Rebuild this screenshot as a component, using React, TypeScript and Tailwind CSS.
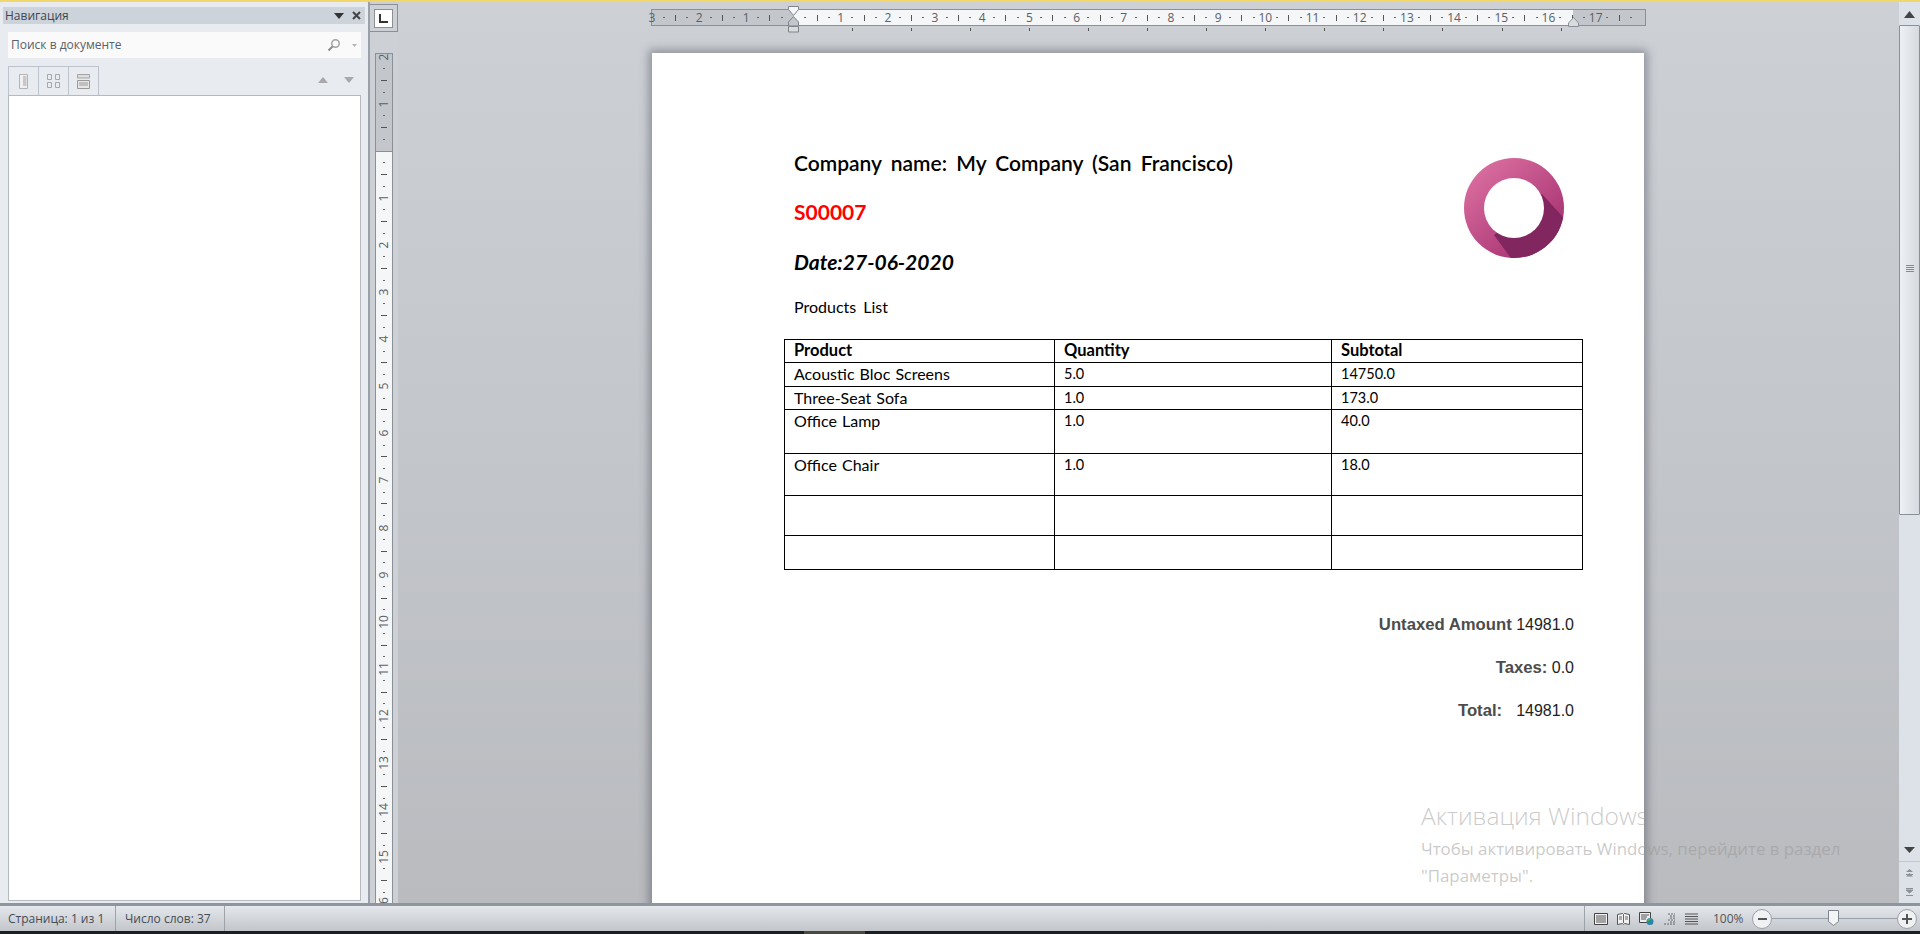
import React from "react";

const uiFont = "font-['Open_Sans','Noto_Sans',sans-serif]";
const docFont = "font-['Lato','Noto_Sans',sans-serif]";

const rows = [
  { product: "Acoustic Bloc Screens", qty: "5.0", subtotal: "14750.0", h: "h-[24px]" },
  { product: "Three-Seat Sofa", qty: "1.0", subtotal: "173.0", h: "h-[23px]" },
  { product: "Office Lamp", qty: "1.0", subtotal: "40.0", h: "h-[44px]" },
  { product: "Office Chair", qty: "1.0", subtotal: "18.0", h: "h-[42px]" },
  { product: "", qty: "", subtotal: "", h: "h-[40px]" },
  { product: "", qty: "", subtotal: "", h: "h-[34px]" },
];

function RulerTick({ pos, vertical }: { pos: number; vertical?: boolean }) {
  const quarter = Math.round(pos * 4);
  if (quarter === 0) return null;
  if (quarter % 4 === 0) {
    return (
      <span className={`${uiFont} text-[12px] leading-none text-[#5a5f66] ${vertical ? "-rotate-90" : ""}`}>
        {Math.abs(quarter / 4)}
      </span>
    );
  }
  if (quarter % 2 === 0) {
    return <span className={vertical ? "h-px w-[6px] bg-[#555]" : "h-[6px] w-px bg-[#555]"} />;
  }
  return <span className="h-px w-[2px] bg-[#666]" />;
}

function HorizontalRuler() {
  const slots = Array.from({ length: 84 }, (_, i) => -3 + i / 4);
  return (
    <div className="relative ml-[253px] h-[17px] w-[995px] border border-[#8b9097]">
      <div className="flex h-full">
        <div className="w-[141px] bg-[#c3c7cc]" />
        <div className="w-[780px] bg-[#f5f6f7]" />
        <div className="flex-1 bg-[#c3c7cc]" />
      </div>
      <div className="absolute left-[-6px] top-0 flex h-full">
        {slots.map((p) => (
          <div key={p} className="flex h-full w-[11.81px] shrink-0 items-center justify-center">
            <RulerTick pos={p} />
          </div>
        ))}
      </div>
      <svg className="absolute left-[135px] top-[-4px]" width="13" height="27" viewBox="0 0 13 27">
        <path d="M1.5.5h10v3l-5 6-5-6z" fill="#f5f6f7" stroke="#7e8389" />
        <path d="M6.5 10.5l5 5.5v4h-10v-4z" fill="#c3c7cc" stroke="#7e8389" />
        <path d="M1.5 20.5h10v5.500h-10z" fill="#d9dbde" stroke="#7e8389" />
      </svg>
      <svg className="absolute left-[915px] top-[7px]" width="13" height="10" viewBox="0 0 13 10">
        <path d="M6.500.5l5 5.500v3.500h-10v-3.500z" fill="#d9dbde" stroke="#8b9097" />
      </svg>
    </div>
  );
}

function TabStops() {
  return (
    <div className="ml-[454px] mt-[2px] flex h-[3px]">
      {Array.from({ length: 13 }, (_, i) => (
        <div key={i} className="w-[59.05px] shrink-0">
          <div className="h-[3px] w-px bg-[#555]" />
        </div>
      ))}
    </div>
  );
}

function VerticalRuler() {
  const slots = Array.from({ length: 74 }, (_, i) => -2 + i / 4);
  return (
    <div className="relative ml-[5px] mt-[21px] min-h-0 w-[18px] flex-1 overflow-hidden border-x border-t border-[#8b9097]">
      <div className="h-[98px] border-b border-[#8b9097] bg-[#c3c7cc]" />
      <div className="h-full bg-[#f5f6f7]" />
      <div className="absolute left-0 top-[-3px] flex w-full flex-col">
        {slots.map((p) => (
          <div key={p} className="flex h-[11.775px] shrink-0 items-center justify-center">
            <RulerTick pos={p} vertical />
          </div>
        ))}
      </div>
    </div>
  );
}

function NavPanel() {
  return (
    <aside className={`${uiFont} flex w-[368px] shrink-0 flex-col bg-[#e8ebf0]`}>
      <div className="mx-[3px] mt-[5px] flex h-[17px] items-center justify-between bg-[#cdd3da] pl-[2px] pr-[4px]">
        <span className="text-[12px] leading-none text-[#3a4654]">Навигация</span>
        <div className="flex items-center gap-[8px]">
          <svg width="10" height="6" viewBox="0 0 10 6">
            <path d="M0 0h10L5 6z" fill="#333" />
          </svg>
          <svg width="9" height="9" viewBox="0 0 9 9">
            <path d="M1 1l7 7M8 1L1 8" stroke="#444" strokeWidth="2" />
          </svg>
        </div>
      </div>
      <div className="ml-[8px] mr-[7px] mt-[8px] flex h-[26px] items-center justify-between bg-[#fafafa] pl-[3px] pr-[4px]">
        <span className="text-[12px] leading-none text-[#5b6168]">Поиск в документе</span>
        <div className="flex items-center gap-[11px]">
          <svg width="14" height="14" viewBox="0 0 14 14" fill="none">
            <circle cx="8.500" cy="5.500" r="3.700" stroke="#a2a2a2" strokeWidth="1.500" />
            <path d="M5.500 8.500L1.500 12.500" stroke="#8b8b8b" strokeWidth="2" />
          </svg>
          <svg width="5" height="3" viewBox="0 0 5 3">
            <path d="M0 0h5L2.500 3z" fill="#b5b5b5" />
          </svg>
        </div>
      </div>
      <div className="ml-[8px] mr-[7px] mt-[8px] flex h-[29px] items-end justify-between">
        <div className="flex h-full border-t border-l border-[#bcc3cc]">
          <div className="flex w-[30px] items-center justify-center border-r border-[#bcc3cc]">
            <svg width="9" height="15" viewBox="0 0 9 15">
              <path d="M.5.500h8v14h-8z" fill="#f1f0f0" stroke="#b4b4b4" />
              <path d="M4 3h3.500M4 5h3.500M4 7h3.500M4 9h3.500M4 11h3.500" stroke="#a0a0a0" />
            </svg>
          </div>
          <div className="flex w-[30px] items-center justify-center border-r border-[#bcc3cc]">
            <svg width="13" height="14" viewBox="0 0 13 14">
              <path d="M.5.500h4v5h-4zM8.500.500h4v5h-4zM.5 8.500h4v5h-4zM8.500 8.500h4v5h-4z" fill="none" stroke="#a8a8a8" />
            </svg>
          </div>
          <div className="flex w-[30px] items-center justify-center border-r border-[#bcc3cc]">
            <svg width="13" height="15" viewBox="0 0 13 15">
              <path d="M.5.500h12v3.500h-12z" fill="#ddd" stroke="#a5a5a5" />
              <path d="M.5 6.500h12v8h-12z" fill="#e6e6e6" stroke="#999" />
              <path d="M2 9h9M2 11h9" stroke="#999" />
            </svg>
          </div>
        </div>
        <div className="mb-[12px] mr-[7px] flex gap-[16px]">
          <svg width="10" height="6" viewBox="0 0 10 6">
            <path d="M0 6h10L5 0z" fill="#a9a9a9" />
          </svg>
          <svg width="10" height="6" viewBox="0 0 10 6">
            <path d="M0 0h10L5 6z" fill="#a9a9a9" />
          </svg>
        </div>
      </div>
      <div className="mb-[2px] ml-[8px] mr-[7px] flex-1 border border-[#b5bac0] bg-white" />
    </aside>
  );
}

function Logo() {
  return (
    <svg className="mr-[16px] mt-[13px]" width="100" height="100" viewBox="0 0 100 100">
      <defs>
        <linearGradient id="ring" x1="0.15" y1="0.1" x2="0.85" y2="0.9">
          <stop offset="0" stopColor="#d96d9e" />
          <stop offset="1" stopColor="#a42f70" />
        </linearGradient>
        <clipPath id="disc">
          <circle cx="50" cy="50" r="50" />
        </clipPath>
      </defs>
      <circle cx="50" cy="50" r="50" fill="url(#ring)" />
      <path clipPath="url(#disc)" d="M78 36L118 80 60 118 30 77z" fill="#82265f" />
      <circle cx="50" cy="50" r="30" fill="white" />
    </svg>
  );
}

function Page() {
  return (
    <div className={`${docFont} ml-[254px] mt-[22px] h-[1404px] w-[992px] bg-white pl-[132px] shadow-[0_0_9px_3px_rgba(60,65,75,0.45)]`}>
      <div className="flex w-[796px] justify-between pt-[92px]">
        <div className="pl-[10px]">
          <p className="h-[49px] text-[21px] font-semibold leading-[36px] text-black [word-spacing:4px]">
            Company name: My Company (San Francisco)
          </p>
          <p className="h-[50px] text-[21px] font-bold leading-[36px] text-[#ff0000]">S00007</p>
          <p className="h-[53px] text-[21px] font-bold italic leading-[36px] text-black">Date:27-06-2020</p>
          <p className="text-[16px] leading-[20px] text-black [word-spacing:3px]">Products List</p>
        </div>
        <Logo />
      </div>
      <table className="mt-[22px] w-[799px] table-fixed border-collapse text-[14.500px] leading-[20px] text-black">
        <thead>
          <tr className="h-[23px] text-[16.500px]">
            <th className="w-[270px] border border-black pl-[9px] text-left align-top font-bold">Product</th>
            <th className="w-[277px] border border-black pl-[9px] text-left align-top font-bold">Quantity</th>
            <th className="border border-black pl-[9px] text-left align-top font-bold">Subtotal</th>
          </tr>
        </thead>
        <tbody>
          {rows.map((r, i) => (
            <tr key={i} className={r.h}>
              <td className="border border-black pl-[9px] pt-px align-top text-[16px] [word-spacing:1px]">{r.product}</td>
              <td className="border border-black pl-[9px] pt-px align-top">{r.qty}</td>
              <td className="border border-black pl-[9px] pt-px align-top">{r.subtotal}</td>
            </tr>
          ))}
        </tbody>
      </table>
      <div className="mt-[46px] flex w-[790px] flex-col items-end gap-[25px] font-['Liberation_Sans',sans-serif] text-[16px] leading-[18px] text-[#222]">
        <p>
          <b className="text-[16.700px] text-[#4c4c4c]">Untaxed Amount</b> 14981.0
        </p>
        <p>
          <b className="text-[16.700px] text-[#4c4c4c]">Taxes:</b> 0.0
        </p>
        <p>
          <b className="text-[16.700px] text-[#4c4c4c]">Total:</b>
          <span className="ml-[14px]">14981.0</span>
        </p>
      </div>
    </div>
  );
}

function ScrollBar() {
  return (
    <div className="flex w-[21px] shrink-0 flex-col bg-[#dde1e8]">
      <div className="mt-[2px] flex h-[21px] items-center justify-center">
        <svg width="11" height="7" viewBox="0 0 11 7">
          <path d="M0 7h11L5.500 0z" fill="#444" />
        </svg>
      </div>
      <div className="flex h-[490px] items-end justify-center rounded-[1px] border border-[#8b9097] bg-linear-to-r from-[#eef0f4] to-[#d6dae0] pb-[241px]">
        <svg width="8" height="8" viewBox="0 0 8 8">
          <path d="M0 .5h8M0 2.500h8M0 4.500h8M0 6.500h8" stroke="#8a8a8a" />
        </svg>
      </div>
      <div className="flex flex-1 items-end justify-center pb-[8px]">
        <svg width="11" height="6" viewBox="0 0 11 6">
          <path d="M0 0h11L5.500 6z" fill="#444" />
        </svg>
      </div>
      <div className="flex h-[42px] flex-col items-center justify-around border-t border-[#c3c7ce] py-[2px]">
        <svg width="7" height="8" viewBox="0 0 7 8">
          <path d="M3.500 0L7 3H0zM0 5h7v1H0zM3.500 4L7 7.500H0z" fill="#8d9096" />
        </svg>
        <svg width="7" height="8" viewBox="0 0 7 8">
          <path d="M0 .5h7M0 2h7L3.500 5zM0 7.500h7" stroke="#8d9096" fill="#8d9096" />
        </svg>
      </div>
    </div>
  );
}

function StatusBar() {
  return (
    <footer className={`${uiFont} flex h-[28px] shrink-0 items-center border-t-[3px] border-[#8f959c] bg-linear-to-b from-[#e4e7eb] to-[#c2c6cb] text-[12px] text-[#444c55]`}>
      <div className="flex h-full w-[116px] items-center border-r border-[#9ea3a9] pl-[8px]">Страница: 1 из 1</div>
      <div className="flex h-full w-[109px] items-center border-r border-[#9ea3a9] pl-[9px]">Число слов: 37</div>
      <div className="ml-auto flex h-full items-center border-l border-[#9ea3a9] pl-[9px]">
        <div className="flex items-center gap-[9px]">
          <svg width="14" height="12" viewBox="0 0 14 12">
            <path d="M.5.500h13v11H.5z" fill="#f2f2f2" stroke="#444" />
            <path d="M2 3h10M2 5h10M2 7h10M2 9h10" stroke="#555" />
          </svg>
          <svg width="13" height="12" viewBox="0 0 13 12">
            <path d="M.5 1.500l5-1 1 1 1-1 5 1v10l-5-1-1 1-1-1-5 1z" fill="#f2f2f2" stroke="#555" />
            <path d="M6.500 2v8M2 4h3M2 6h3M8 4h3M8 6h3" stroke="#666" />
          </svg>
          <svg width="15" height="13" viewBox="0 0 15 13">
            <path d="M.5.500h11v10H.5z" fill="#eee" stroke="#444" />
            <path d="M2 3h8M2 5h6M2 7h5" stroke="#555" />
            <circle cx="11" cy="9.500" r="3.500" fill="#2a85a8" />
            <path d="M9 9a2 2 0 013-1.500" stroke="#5cb04a" strokeWidth="1.500" fill="none" />
          </svg>
          <svg width="13" height="12" viewBox="0 0 13 12">
            <path d="M5 1h7M7 3h5M7 5h5M5 7h7M7 9h5M1 11h11" stroke="#666" strokeDasharray="2 1" />
          </svg>
          <svg width="13" height="12" viewBox="0 0 13 12">
            <path d="M0 1h13M0 3.500h13M0 6h13M0 8.500h13M0 11h13" stroke="#555" />
          </svg>
        </div>
        <span className="ml-[15px] w-[31px] text-[#555]">100%</span>
        <div className="ml-[8px] flex items-center pr-[3px]">
          <div className="flex h-[20px] w-[20px] items-center justify-center rounded-full border border-[#9aa0a8] bg-[#f0f1f3]">
            <span className="h-[2px] w-[9px] bg-[#555]" />
          </div>
          <div className="relative h-px w-[125px] bg-[#9aa0a8]">
            <svg className="absolute left-[56px] top-[-8px]" width="11" height="16" viewBox="0 0 11 16">
              <path d="M.5.500h10v11l-5 4-5-4z" fill="#f3f4f5" stroke="#7f858c" />
            </svg>
          </div>
          <div className="relative flex h-[20px] w-[20px] items-center justify-center rounded-full border border-[#9aa0a8] bg-[#f0f1f3]">
            <span className="h-[2px] w-[10px] bg-[#555]" />
            <span className="absolute h-[10px] w-[2px] bg-[#555]" />
          </div>
        </div>
      </div>
    </footer>
  );
}

export default function App() {
  return (
    <div className="relative flex h-screen w-screen flex-col overflow-hidden bg-[#cdd1d6]">
      <div className="h-[2px] shrink-0 bg-[#f1d66a]" />
      <div className="flex min-h-0 flex-1">
        <NavPanel />
        <div className="flex w-[30px] shrink-0 flex-col border-l-2 border-[#9aa0a8] bg-[#cdd1d6]">
          <div className="mt-[2px] flex h-[28px] w-[28px] items-center justify-center border-y border-r border-[#8b9097]">
            <div className="flex h-[19px] w-[19px] items-center justify-center border border-[#8b9097] bg-white">
              <svg width="9" height="9" viewBox="0 0 9 9">
                <path d="M1 0v8h8" stroke="#333" strokeWidth="2" fill="none" />
              </svg>
            </div>
          </div>
          <VerticalRuler />
        </div>
        <main className="min-w-0 flex-1 overflow-hidden bg-linear-to-b from-[#cdd1d6] to-[#b9bbbf] pt-[7px]">
          <HorizontalRuler />
          <TabStops />
          <Page />
        </main>
        <ScrollBar />
      </div>
      <StatusBar />
      <div className="flex h-[3px] shrink-0 bg-[#1c1f1f]">
        <div className="ml-[804px] w-[61px] bg-[#4a4843]" />
      </div>
      <div className="pointer-events-none absolute left-[1421px] top-[800px] font-['Open_Sans',sans-serif] text-[rgba(150,150,150,0.5)]">
        <p className="text-[24.500px] font-light leading-[32px]">Активация Windows</p>
        <p className="mt-[3px] text-[16.850px] leading-[27px]">Чтобы активировать Windows, перейдите в раздел</p>
        <p className="text-[16.850px] leading-[27px]">"Параметры".</p>
      </div>
    </div>
  );
}
